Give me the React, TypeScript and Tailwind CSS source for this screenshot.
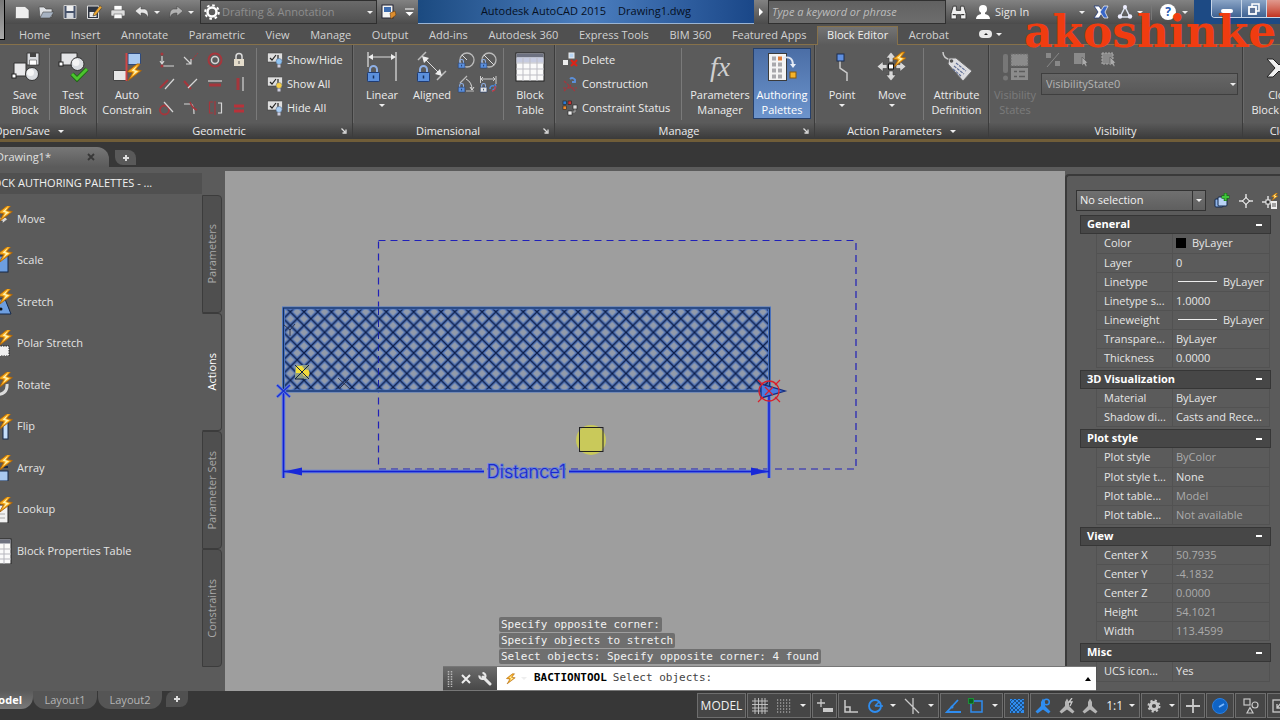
import { useState } from 'react';
import type { ReactNode } from 'react';
import { clsx } from 'clsx';

/* ---------- icon helpers ---------- */

type IconProps = { size?: number; box?: number; children?: ReactNode; className?: string };

function Icon({ size = 16, box, children, className }: IconProps) {
  const b = box ?? size;
  return (
    <svg aria-hidden="true" width={size} height={size} viewBox={`0 0 ${b} ${b}`} fill="none" className={clsx('shrink-0', className)}>
      {children}
    </svg>
  );
}

function Bolt({ x = 0, y = 0, s = 1 }: { x?: number; y?: number; s?: number }) {
  return (
    <g transform={`translate(${x} ${y}) scale(${s})`}>
      <path d="M10 0 L1 7 L6 8 L2 15 L14 6 L9 5 L13 0 Z" fill="#f5a81c" stroke="#a8620a" strokeWidth="0.8" />
      <path d="M10 1.500 L5 6 L8 7 L5.500 11 L11 6.500 L7.500 5.500 Z" fill="#fff3b0" />
    </g>
  );
}

function Lock({ x, y, s = 1, fill = '#5b8fdc' }: { x: number; y: number; s?: number; fill?: string }) {
  return (
    <g transform={`translate(${x} ${y}) scale(${s})`}>
      <path d="M3 8 V4.500 a3.500 3.500 0 0 1 7 0 V8" stroke="#8fb0e6" strokeWidth="2" fill="none" />
      <rect x="0.5" y="7.500" width="12" height="9" rx="0.8" fill={fill} stroke="#1f3c74" />
      <path d="M6.500 10.500 v3" stroke="#16305e" strokeWidth="1.500" />
    </g>
  );
}

function Caret({ className }: { className?: string }) {
  return <span aria-hidden="true" className={clsx('block h-0 w-0 shrink-0 border-x-[3px] border-t-[3px] border-x-transparent border-t-[#eee]', className)} />;
}

const SaveBlockIcon = (
  <Icon size={32}>
    <path d="M5 12 H17 V25 H5 Z" fill="#e8e8ea" stroke="#333" />
    <circle cx="23" cy="23" r="6.500" fill="#d9dce0" stroke="#333" />
    <circle cx="21.500" cy="21.500" r="3.500" fill="#f6f6f6" />
    <path d="M18 2 H30 V14 H18 Z" fill="#d8dade" stroke="#3a3a3a" />
    <path d="M21 2 h6 v4 h-6 Z" fill="#444" />
    <path d="M20.500 9 h7 v5 h-7 Z" fill="#fff" stroke="#555" strokeWidth="0.600" />
    <rect x="3" y="23" width="4" height="4" fill="#fff" stroke="#222" />
  </Icon>
);

const TestBlockIcon = (
  <Icon size={32}>
    <path d="M4 2 H20 V14 H4 Z" fill="#e3e4e6" stroke="#333" />
    <circle cx="20.500" cy="13" r="6.500" fill="#d9dce0" stroke="#333" />
    <circle cx="19" cy="11.500" r="3.500" fill="#f4f4f4" />
    <rect x="2" y="11" width="4" height="4" fill="#fff" stroke="#222" />
    <path d="M15 23 L20 28 L30 18" stroke="#17650d" strokeWidth="4.500" />
    <path d="M15 23 L20 28 L30 18" stroke="#4cc42e" strokeWidth="3" />
  </Icon>
);

const AutoConstrainIcon = (
  <Icon size={32}>
    <path d="M2.500 19.500 H16 V29.500 H2.500 Z" fill="#e6e6e6" stroke="#444" />
    <path d="M17 2.500 H29.500 V13.500 H17 Z" fill="#a9c9f0" stroke="#2e4a7c" />
    <path d="M15.500 2 V30" stroke="#cf4646" strokeWidth="2" />
    <Bolt x={15} y={13} s={1.1} />
  </Icon>
);

const LinearIcon = (
  <Icon size={32}>
    <path d="M2 1 V16 M30 1 V30" stroke="#c8c8c8" strokeWidth="1.500" />
    <path d="M4 6 H28" stroke="#ddd" />
    <path d="M2 6 l5 -3 v6 Z M30 6 l-5 -3 v6 Z" fill="#eee" />
    <Lock x={1} y={14} />
  </Icon>
);

const AlignedIcon = (
  <Icon size={32}>
    <path d="M2 9 L10 1 M21 29 L30 20" stroke="#bbb" strokeWidth="1.500" />
    <path d="M7 6 L25 24" stroke="#ddd" />
    <path d="M6 5 l7 2 l-5 5 Z M26 25 l-7 -2 l5 -5 Z" fill="#eee" />
    <Lock x={1} y={14} />
  </Icon>
);

const TableIcon = (
  <Icon size={32}>
    <rect x="2" y="2" width="28" height="28" fill="#fafafa" stroke="#222" />
    <rect x="2.500" y="2.500" width="27" height="4" fill="#6d7180" />
    <rect x="2.500" y="6.500" width="27" height="5" fill="#c6cbe0" />
    <path d="M9 7 V30 M16 7 V30 M23 7 V30 M2 12 H30 M2 18 H30 M2 24 H30" stroke="#bdbdc4" strokeWidth="1" />
  </Icon>
);

const PalettesIcon = (
  <Icon size={32}>
    <rect x="2.500" y="2.500" width="18" height="27" fill="#f4f4f4" stroke="#3b3b3b" />
    {[6, 12, 18, 24].map((y) => (
      <g key={y}>
        <rect x="6" y={y - 0.5} width="4" height="4" fill="#a9a9ad" />
        <rect x="12" y={y - 0.5} width="4" height="4" fill={y === 6 ? '#e07a35' : '#a9a9ad'} />
      </g>
    ))}
    <path d="M17 7 C24 5 27 8 27 14" stroke="#dfe6f2" strokeWidth="1.800" />
    <path d="M24 13 h6 l-3 4 Z" fill="#e8eef8" />
    <rect x="24" y="21" width="6" height="6" fill="#f5b32a" stroke="#8a5a08" />
  </Icon>
);

const PointIcon = (
  <Icon size={32}>
    <path d="M14 9 V17 L21 22 V30" stroke="#ccc" strokeWidth="1.500" />
    <rect x="11" y="3" width="7" height="7" fill="#5f8fe0" stroke="#1b2c50" />
  </Icon>
);

const MoveArrows = (
  <>
    <path d="M15 1 l5 6 h-3 v4 h-4 v-4 h-3 Z M15 30 l5 -6 h-3 v-4 h-4 v4 h-3 Z" fill="#d8d8d8" stroke="#444" strokeWidth="0.600" />
    <path d="M1 15.500 l6 -5 v3 h4 v4 h-4 v3 Z M30 15.500 l-6 -5 v3 h-4 v4 h4 v3 Z" fill="#d8d8d8" stroke="#444" strokeWidth="0.600" />
    <rect x="12.500" y="13" width="5" height="5" fill="#fff" stroke="#111" />
  </>
);

const MoveIcon = (
  <Icon size={32}>
    {MoveArrows}
    <Bolt x={16} y={1} s={1} />
  </Icon>
);

const TagIcon = (
  <Icon size={32}>
    <path d="M2 1 C2 6 5 8 10 9" stroke="#ccc" strokeWidth="1.500" />
    <path d="M7 13 L8 7 L15 7 L31 20 L22 30 Z" fill="#dcdcdf" stroke="#666" />
    <circle cx="10.500" cy="10" r="1.800" fill="#555" />
    <path d="M15 12 L25 20 M13 15 L23 23 M12 18 L20 25" stroke="#5f6d96" strokeWidth="1.200" strokeDasharray="3 1" />
  </Icon>
);

const VisStatesIcon = (
  <Icon size={32}>
    <rect x="4" y="3" width="5" height="19" rx="2" fill="#777" />
    <circle cx="6.500" cy="27" r="2.500" fill="#777" />
    <rect x="12" y="3" width="17" height="12" fill="#8b8b8b" stroke="#6b6b6b" strokeDasharray="2 1" />
    <rect x="12" y="17" width="17" height="12" fill="#8b8b8b" />
    <path d="M15 20.500 h3 M20 20.500 h6 M15 25.500 h3 M20 25.500 h6" stroke="#5c5c5c" strokeWidth="1.500" />
  </Icon>
);

const CloseBlockIcon = (
  <Icon size={32}>
    <path d="M1 8 H7 L13 14 L19 8 H24 L16 17 L24 26 H19 L13 20 L7 26 H1 L9 17 Z" fill="#f2f2f2" stroke="#222" />
  </Icon>
);

const W = '#d6d6d6';
const R = '#a5363c';

const geometricIcons: { name: string; art: ReactNode }[] = [
  { name: 'Coincident', art: <><path d="M3 4 V11 M1 9 l2 3 l2 -3 M3 14 H15" stroke={W} strokeWidth="1.200" /><circle cx="3" cy="2" r="1.500" fill={R} /><circle cx="3" cy="14" r="1.500" fill={R} /></> },
  { name: 'Collinear', art: <><path d="M1 5 L8 12 M8 7 V12 H3" stroke={W} strokeWidth="1.200" /><path d="M9 8 L15 1" stroke={R} strokeDasharray="3 1" /></> },
  { name: 'Concentric', art: <><circle cx="8" cy="8" r="6.500" stroke={R} strokeWidth="2" /><circle cx="8" cy="8" r="3.500" stroke={W} strokeWidth="1.500" /></> },
  { name: 'Fix', art: <><path d="M5 7 V4.500 a3 3 0 0 1 6 0 V7" stroke="#ddd" strokeWidth="1.500" /><rect x="3" y="7" width="10" height="7" fill="#e4dccb" /><path d="M8 9 v3" stroke="#555" /></> },
  { name: 'Parallel', art: <><path d="M1 12 L9 4" stroke={R} strokeWidth="2" /><path d="M6 13 L15 3" stroke={W} strokeWidth="1.200" /></> },
  { name: 'Perpendicular', art: <><path d="M1 5 L8 13" stroke={R} strokeWidth="2" /><path d="M5 12 L14 3" stroke={W} strokeWidth="1.200" /></> },
  { name: 'Horizontal', art: <><path d="M1 5 H15" stroke={W} strokeWidth="1.200" /><path d="M2 9 H14" stroke={R} strokeWidth="3" /></> },
  { name: 'Vertical', art: <><path d="M7 2 V14" stroke={R} strokeWidth="3" /><path d="M12 1 V15" stroke={W} strokeWidth="1.200" /></> },
  { name: 'Tangent', art: <><circle cx="5.500" cy="10" r="4.500" stroke={R} strokeWidth="1.800" /><path d="M5 2 L14 12" stroke={W} strokeWidth="1.200" /></> },
  { name: 'Smooth', art: <><path d="M1 4 H8 Q11 5 11 14" stroke={W} strokeWidth="1.200" /><path d="M7 2 Q9 8 14 10" stroke={R} strokeWidth="1.500" /></> },
  { name: 'Symmetric', art: <><path d="M6 2 H2.500 V13 H6 M8 1 V15" stroke={R} strokeWidth="1.200" /><path d="M11 3 H14.500 V13 H11" stroke={W} strokeWidth="1.200" /></> },
  { name: 'Equal', art: <path d="M3 6 H13 M3 11 H13" stroke="#b8323a" strokeWidth="3" /> },
];

function ShowHideGlyph({ bulb }: { bulb: string }) {
  return (
    <Icon>
      <rect x="0.500" y="1" width="15" height="9" fill="#dedede" stroke="#444" strokeWidth="0.600" />
      <path d="M3 6 l2 2 l4 -5 M11 3 v4" stroke="#222" strokeWidth="1.200" />
      <circle cx="12" cy="9.500" r="3" fill={bulb} stroke="#4c6383" strokeWidth="0.500" />
      <rect x="10.500" y="12.500" width="3" height="3" fill="#ccd" />
    </Icon>
  );
}

const DeleteGlyph = (
  <Icon>
    <rect x="7" y="1" width="5" height="5" fill="#b7d4f2" stroke="#eee" />
    <rect x="1" y="8" width="5" height="5" fill="#eee" />
    <path d="M9 8 l6 6 M15 8 l-6 6" stroke="#dd2417" strokeWidth="2.200" />
  </Icon>
);
const ConstructionGlyph = (
  <Icon>
    <path d="M8 3 a3 3 0 0 1 5 3 M13 3 v3 h-3" stroke="#5c8fd8" strokeWidth="1.800" />
    <path d="M2 5 L13 15 M1 12 H15 M2 15 L9 9" stroke={R} strokeWidth="1.200" strokeDasharray="3 1" />
  </Icon>
);
const StatusGlyph = (
  <Icon>
    <rect x="1" y="1" width="3.500" height="3.500" fill="#2d7bd2" stroke="#222" strokeWidth="0.600" />
    <rect x="6" y="1" width="3.500" height="3.500" fill="#c33" stroke="#222" strokeWidth="0.600" />
    <rect x="1" y="6" width="3.500" height="3.500" fill="#ef8a2c" stroke="#222" strokeWidth="0.600" />
    <path d="M8 12 h5 v-6" stroke="#aaa" />
    <rect x="11" y="5" width="4" height="4" fill="#ddd" stroke="#222" strokeWidth="0.600" />
    <rect x="6" y="11" width="4" height="4" fill="#eee" stroke="#222" strokeWidth="0.600" />
  </Icon>
);

const dimIcons: { name: string; art: ReactNode }[] = [
  { name: 'Radius', art: <><circle cx="10" cy="9" r="7" stroke="#bbb" strokeWidth="1.300" /><path d="M10 9 L5 4" stroke="#ddd" /><Lock x={1} y={8} s={0.55} /></> },
  { name: 'Diameter', art: <><circle cx="10" cy="9" r="7" stroke="#bbb" strokeWidth="1.300" /><path d="M5 4 L15 14" stroke="#ddd" /><Lock x={1} y={8} s={0.55} /></> },
  { name: 'Angular', art: <><path d="M3 8 L10 1 M9 16 H17" stroke="#bbb" strokeWidth="1.200" /><path d="M9 4 Q15 7 15 15 M13 12 l2 3 l2 -3" stroke="#ddd" /><Lock x={1} y={8} s={0.55} /></> },
  { name: 'Convert', art: <><path d="M1.500 1 V8 M17 1 V9 M2 4 H16 M4 2 l-2 2 l2 2 M14 2 l2 2 l-2 2" stroke="#ccc" /><Lock x={1} y={8} s={0.55} fill="#e5e5e5" /><path d="M11 14 q0 -4 4 -3 M16 9 q2 4 -3 7" stroke="#4b8be0" strokeWidth="1.500" /><path d="M13 16 q4 0 3 -5" stroke="#c33" strokeWidth="1.300" /></> },
];

/* ---------- title bar ---------- */

const quickAccess: { name: string; art: ReactNode; drop?: boolean }[] = [
  { name: 'New', art: <path d="M1.500 2.500 H11 L15 6 V14.500 H1.500 Z" fill="#eee" stroke="#555" strokeWidth="0.600" /> },
  { name: 'Open', art: <><path d="M1 3 H6 L8 5 H14 V13 H2 Z" fill="#dfe2e6" stroke="#444" strokeWidth="0.600" /><path d="M5 8 H16 L12 14 H2 Z" fill="#a6b2c2" stroke="#444" strokeWidth="0.600" /></> },
  { name: 'Save', art: <><path d="M2 1.500 H14 V14.500 H2 Z" fill="#46526a" stroke="#ccc" /><rect x="4.500" y="2" width="7" height="5" fill="#f0f0f0" /><rect x="4.500" y="9" width="7" height="5" fill="#d5d9df" /></> },
  { name: 'Save As', art: <><path d="M1.500 2 H12.500 V14.500 H1.500 Z" fill="#2e3440" stroke="#ddd" /><rect x="3.500" y="8" width="7" height="5" fill="#e8e8e8" /><path d="M8 9 L14 1.500 L16 3.500 L10 11 L7 12 Z" fill="#f0a830" stroke="#333" strokeWidth="0.600" /></> },
  { name: 'Plot', art: <><rect x="4" y="1.500" width="8" height="5" fill="#fff" stroke="#666" strokeWidth="0.600" /><rect x="1" y="6" width="14" height="6" rx="1" fill="#dcdcdc" stroke="#555" strokeWidth="0.600" /><rect x="4" y="10" width="8" height="4.500" fill="#fafafa" stroke="#666" strokeWidth="0.600" /></> },
  { name: 'Undo', drop: true, art: <path d="M1 7 L7 2 V5 H11 Q15 6 14 14 Q13 9.500 9 9 H7 V12 Z" fill="#e6e6e6" stroke="#444" strokeWidth="0.500" /> },
  { name: 'Redo', drop: true, art: <path d="M15 7 L9 2 V5 H5 Q1 6 2 14 Q3 9.500 7 9 H9 V12 Z" fill="#b2b2b2" stroke="#444" strokeWidth="0.500" /> },
];

function TitleBar() {
  return (
    <header className="flex h-6 items-stretch bg-linear-to-b from-[#828282] to-[#4b4b4b]">
      <div className="flex shrink-0 items-center gap-2 pl-[14px]">
        {quickAccess.map((q) => (
          <div key={q.name} className="flex items-center gap-1">
            <button type="button" aria-label={q.name}><Icon>{q.art}</Icon></button>
            {q.drop && <Caret />}
          </div>
        ))}
      </div>

      <div className="relative ml-[6px] flex w-[177px] shrink-0 items-center border border-[#2f2f2f] bg-linear-to-b from-[#6a6a6a] to-[#505050]">
        <Icon size={16} className="ml-[3px]">
          <circle cx="8" cy="8" r="4.500" stroke="#fff" strokeWidth="2.500" />
          <circle cx="8" cy="8" r="6.800" stroke="#fff" strokeWidth="2" strokeDasharray="2.600 2.740" />
        </Icon>
        <select aria-label="Workspace" className="w-full appearance-none bg-transparent pl-[2px] text-[11px] text-[#8d8d8d] outline-none">
          <option>Drafting &amp; Annotation</option>
        </select>
        <Caret className="pointer-events-none absolute right-[3px]" />
      </div>

      <div className="flex w-[41px] shrink-0 items-center gap-2 pl-1">
        <button type="button" aria-label="Render preview">
          <Icon>
            <rect x="1" y="1" width="11" height="13" fill="#f4f4f4" stroke="#223" />
            <rect x="3" y="3" width="7" height="5" fill="#3d6cb0" />
            <path d="M9 9 l5 -2 l1 4 l-5 4 Z" fill="#dd8d2e" stroke="#6b3d0a" strokeWidth="0.600" />
          </Icon>
        </button>
        <Icon size={9}><path d="M0 1 H9" stroke="#fff" /><path d="M0.500 4 H8.500 L4.500 8 Z" fill="#fff" /></Icon>
      </div>

      <div className="flex min-w-0 flex-1 items-center justify-center gap-3 border-b border-[#9ab4d4] bg-linear-to-r from-[#1b4a80] via-[#4c7fc0] to-[#1a4788] text-[11px] whitespace-nowrap text-[#06101f]">
        <span>Autodesk AutoCAD 2015</span>
        <span>Drawing1.dwg</span>
      </div>

      <button type="button" aria-label="Collapse search" className="flex w-[14px] shrink-0 items-center justify-center">
        <span className="h-0 w-0 border-y-4 border-l-4 border-y-transparent border-l-white" />
      </button>
      <input
        type="search"
        aria-label="Search help"
        placeholder="Type a keyword or phrase"
        className="w-[178px] shrink-0 border border-[#303030] bg-linear-to-b from-[#616161] to-[#6d6d6d] px-[3px] text-[11px] text-white italic outline-none placeholder:text-[#bdbdbd]"
      />
      <div className="flex w-[248px] shrink-0 items-center text-[11px] text-[#e6e6e6]">
        <button type="button" aria-label="Search" className="ml-1">
          <Icon size={17} box={16}>
            <path d="M3 2 h3 v4 h4 v-4 h3 l2 7 v5 h-5 v-4 h-4 v4 h-5 v-5 Z" fill="#f0f0f0" stroke="#333" strokeWidth="0.800" />
            <path d="M2.500 10 h3 M10.500 10 h3" stroke="#333" />
          </Icon>
        </button>
        <button type="button" className="ml-2 flex items-center gap-1">
          <Icon><circle cx="8" cy="5" r="4" fill="#fff" /><path d="M1 15 Q1 11 6 10 V8 h4 v2 Q15 11 15 15 Z" fill="#fff" /></Icon>
          Sign In
        </button>
        <Caret className="ml-auto" />
        <button type="button" aria-label="Autodesk Exchange" className="ml-2">
          <Icon><path d="M1 2 H6 L10 8 L6 14 H1 L5 8 Z" fill="#fff" stroke="#223a78" strokeWidth="0.800" /><path d="M15 2 H11 L7 8 L11 14 H15 L12 8 Z" fill="#3866c8" stroke="#eee" strokeWidth="0.800" /></Icon>
        </button>
        <button type="button" aria-label="Autodesk 360" className="ml-2">
          <Icon><path d="M8 3 L3 13 H13 Z" stroke="#dce4f0" strokeWidth="1.500" /><circle cx="8" cy="3" r="2" fill="#eef" /><circle cx="3" cy="12.500" r="2.200" fill="#eef" /><circle cx="13" cy="12.500" r="2.200" fill="#eef" /></Icon>
        </button>
        <Caret className="ml-1" />
        <span className="ml-2 h-4 w-px bg-[#777]" />
        <button type="button" aria-label="Help" className="ml-2 flex h-4 w-4 items-center justify-center rounded-full bg-white text-[12px] leading-4 font-bold text-[#2459b4]">?</button>
        <Caret className="mx-[6px]" />
      </div>
      <div className="flex w-[86px] shrink-0 items-start justify-end bg-[#1d4a84]">
        <div className="flex h-[18px] w-[69px] overflow-hidden rounded-bl border border-t-0 border-r-0 border-[#c8d6e8]">
          <button type="button" aria-label="Minimize" className="flex w-[29px] items-center justify-center bg-linear-to-b from-[#8ba5c6] to-[#3f6292]"><span className="mt-1 h-1 w-3 rounded-sm bg-white" /></button>
          <button type="button" aria-label="Restore" className="flex w-[26px] items-center justify-center border-x border-[#c8d6e8] bg-linear-to-b from-[#8ba5c6] to-[#3f6292]">
            <Icon size={12}><rect x="4" y="1" width="7" height="7" stroke="#fff" strokeWidth="1.500" /><rect x="1" y="4" width="7" height="7" fill="#5d7397" stroke="#fff" strokeWidth="1.800" /></Icon>
          </button>
          <button type="button" aria-label="Close" className="flex-1 bg-linear-to-b from-[#e0998e] to-[#c0311f]" />
        </div>
      </div>
    </header>
  );
}

/* ---------- ribbon ---------- */

const tabs = ['Home', 'Insert', 'Annotate', 'Parametric', 'View', 'Manage', 'Output', 'Add-ins', 'Autodesk 360', 'Express Tools', 'BIM 360', 'Featured Apps', 'Block Editor', 'Acrobat'];

function RibbonTabs({ active, onPick }: { active: string; onPick: (t: string) => void }) {
  return (
    <nav className="flex h-[21px] items-stretch border-b border-[#86714a] bg-[#505050] pl-[9px] text-[11px] text-[#d2d2d2]">
      <div className="flex w-[950px] shrink-0 justify-between">
        {tabs.map((t) => (
          <button
            key={t}
            type="button"
            onClick={() => onPick(t)}
            className={clsx(
              'mt-[2px] -mb-px border border-b-0 px-[9px] pb-[2px] whitespace-nowrap',
              t === active ? 'border-[#86714a] bg-linear-to-b from-[#747474] to-[#5b5b5b] text-[#f0f0f0]' : 'border-transparent',
            )}
          >
            {t}
          </button>
        ))}
      </div>
      <button type="button" aria-label="Minimize ribbon" className="ml-5 flex items-center gap-1">
        <span className="flex h-2 w-[13px] items-center justify-center rounded-sm bg-[#e8e8e8]"><span className="h-0 w-0 border-x-2 border-b-2 border-x-transparent border-b-[#222]" /></span>
        <Caret />
      </button>
    </nav>
  );
}

function BigButton({ icon, lines, className, drop, disabled, pressed }: { icon: ReactNode; lines: string[]; className: string; drop?: boolean; disabled?: boolean; pressed?: boolean }) {
  return (
    <button
      type="button"
      disabled={disabled}
      aria-pressed={pressed}
      className={clsx(
        'flex h-[71px] shrink-0 flex-col items-center border pt-[2px] leading-[15px] whitespace-nowrap',
        className,
        pressed ? 'border-[#26406b] bg-linear-to-b from-[#4b6ea6] to-[#6c94cc] text-white' : 'border-transparent',
        disabled ? 'text-[#7c7c7c]' : 'text-[#ececec]',
      )}
    >
      {icon}
      <span className="mt-1">{lines[0]}</span>
      {lines[1] && <span>{lines[1]}</span>}
      {drop && <Caret className="mt-[2px]" />}
    </button>
  );
}

function Panel({ title, className, children, launcher, drop }: { title: string; className: string; children: ReactNode; launcher?: boolean; drop?: boolean }) {
  return (
    <section aria-label={title} className={clsx('flex flex-col border-r border-[#3c3c3c] shadow-[inset_1px_0_0_#6a6a6a]', className)}>
      <div className="flex h-[78px] items-start overflow-hidden pt-[3px]">{children}</div>
      <div className="flex h-4 items-center justify-center bg-linear-to-b from-[#5a5a5a] to-[#3a3a3a] text-[#ececec]">
        <span className={clsx('whitespace-nowrap', launcher && 'ml-auto')}>{title}</span>
        {drop && <Caret className="ml-2 border-x-4 border-t-4" />}
        {launcher && (
          <button type="button" aria-label={`${title} settings`} className="mr-[5px] ml-auto">
            <Icon size={6}><path d="M0.500 0.500 L4 4 M5 1.500 V5 H1.500" stroke="#ddd" strokeWidth="1.300" /></Icon>
          </button>
        )}
      </div>
    </section>
  );
}

const Divider = ({ className }: { className?: string }) => <span className={clsx('h-[72px] w-px shrink-0 bg-[#7a7a7a]', className)} />;

function RowButton({ icon, label }: { icon: ReactNode; label: string }) {
  return (
    <button type="button" className="flex h-6 items-center gap-1 whitespace-nowrap text-[#ececec]">
      {icon}
      {label}
    </button>
  );
}

function Ribbon() {
  return (
    <div className="flex border-b-3 border-[#705d38] bg-[#5b5b5b] text-[11px]">
      <Panel title="Open/Save" drop className="-ml-[38px] w-[135px] shrink-0">
        <div className="flex w-full justify-end">
          <BigButton icon={<Icon size={32}><Bolt x={17} y={6} /><circle cx="23" cy="21" r="6" fill="#ddd" stroke="#333" /></Icon>} lines={['Edit', 'Block']} className="w-8" />
          <BigButton icon={SaveBlockIcon} lines={['Save', 'Block']} className="w-12" />
          <Divider />
          <BigButton icon={TestBlockIcon} lines={['Test', 'Block']} className="w-[46px]" />
        </div>
      </Panel>

      <Panel title="Geometric" launcher className="w-[256px] shrink-0">
        <BigButton icon={AutoConstrainIcon} lines={['Auto', 'Constrain']} className="w-[60px]" />
        <div className="mt-1 grid grid-cols-4 gap-2 pl-[2px]">
          {geometricIcons.map((g) => (
            <button key={g.name} type="button" aria-label={g.name}><Icon>{g.art}</Icon></button>
          ))}
        </div>
        <Divider className="ml-[9px]" />
        <div className="flex flex-col pl-[10px]">
          <RowButton icon={<ShowHideGlyph bulb="#8ec3f2" />} label="Show/Hide" />
          <RowButton icon={<ShowHideGlyph bulb="#f8cf45" />} label="Show All" />
          <RowButton icon={<ShowHideGlyph bulb="#a9cef5" />} label="Hide All" />
        </div>
      </Panel>

      <Panel title="Dimensional" launcher className="w-[202px] shrink-0">
        <BigButton icon={LinearIcon} lines={['Linear']} drop className="ml-1 w-[50px]" />
        <BigButton icon={AlignedIcon} lines={['Aligned']} className="w-[50px]" />
        <div className="mt-[3px] grid grid-cols-2 gap-[6px]">
          {dimIcons.map((d) => (
            <button key={d.name} type="button" aria-label={d.name}><Icon size={18}>{d.art}</Icon></button>
          ))}
        </div>
        <Divider className="ml-2" />
        <BigButton icon={TableIcon} lines={['Block', 'Table']} className="ml-[2px] w-12" />
      </Panel>

      <Panel title="Manage" launcher className="w-[260px] shrink-0">
        <div className="flex w-[126px] shrink-0 flex-col pl-[7px]">
          <RowButton icon={DeleteGlyph} label="Delete" />
          <RowButton icon={ConstructionGlyph} label="Construction" />
          <RowButton icon={StatusGlyph} label="Constraint Status" />
        </div>
        <Divider />
        <BigButton
          icon={<span className="flex h-8 items-center font-['Liberation_Serif',serif] text-[28px] leading-8 text-[#cfcfcf] italic">fx</span>}
          lines={['Parameters', 'Manager']}
          className="ml-[5px] w-[66px]"
        />
        <BigButton icon={PalettesIcon} lines={['Authoring', 'Palettes']} pressed className="w-[58px]" />
      </Panel>

      <Panel title="Action Parameters" drop className="w-[174px] shrink-0">
        <BigButton icon={PointIcon} lines={['Point']} drop className="ml-[2px] w-[50px]" />
        <BigButton icon={MoveIcon} lines={['Move']} drop className="w-[50px]" />
        <Divider className="ml-[6px]" />
        <BigButton icon={TagIcon} lines={['Attribute', 'Definition']} className="w-[65px]" />
      </Panel>

      <Panel title="Visibility" className="w-[254px] shrink-0">
        <BigButton icon={VisStatesIcon} lines={['Visibility', 'States']} disabled className="w-[52px]" />
        <div className="flex min-w-0 flex-1 flex-col pt-1 pr-1">
          <div className="flex gap-3 pl-1">
            <Icon><rect x="1" y="1" width="5" height="5" fill="#888" /><rect x="10" y="9" width="5" height="5" fill="#888" /><path d="M2 15 L14 1" stroke="#888" /></Icon>
            <Icon><rect x="1" y="1" width="11" height="11" fill="#8a8a8a" /><path d="M9 5 v9 l2 -2 l2 3 l1 -1 l-1 -3 h2 Z" fill="#aaa" stroke="#555" strokeWidth="0.600" /></Icon>
            <Icon><rect x="1" y="1" width="11" height="11" fill="#8a8a8a" stroke="#aaa" strokeDasharray="2 1" /><path d="M9 5 v9 l2 -2 l2 3 l1 -1 l-1 -3 h2 Z" fill="#aaa" stroke="#555" strokeWidth="0.600" /></Icon>
          </div>
          <div className="relative mt-[5px] flex items-center">
            <select disabled aria-label="Visibility state" className="h-[22px] w-full appearance-none border border-[#3f3f3f] bg-linear-to-b from-[#666] to-[#585858] px-1 text-[11px] text-[#b4b4b4] opacity-100">
              <option>VisibilityState0</option>
            </select>
            <Caret className="pointer-events-none absolute right-[2px] border-x-4 border-t-4" />
          </div>
        </div>
      </Panel>

      <Panel title="Close" className="w-[82px] shrink-0">
        <BigButton icon={CloseBlockIcon} lines={['Close', 'Block Editor']} className="w-[78px]" />
      </Panel>
    </div>
  );
}

function DocTabs() {
  return (
    <div className="flex h-[25px] items-end bg-[#373737] text-[11px] text-[#e0e0e0]">
      <div className="flex h-5 w-[109px] items-center justify-between rounded-tr-xl bg-linear-to-b from-[#777] to-[#5b5b5b] pr-[14px]">
        <button type="button" className="-ml-1">Drawing1*</button>
        <button type="button" aria-label="Close drawing"><Icon size={8}><path d="M1 1 L7 7 M7 1 L1 7" stroke="#383838" strokeWidth="1.800" /></Icon></button>
      </div>
      <button type="button" aria-label="New drawing" className="mb-[2px] ml-[6px] flex h-[15px] w-[21px] items-center justify-center rounded-tr-lg rounded-bl-lg bg-[#595959]">
        <Icon size={8}><path d="M4 1 V7 M1 4 H7" stroke="#ddd" strokeWidth="2" /></Icon>
      </button>
    </div>
  );
}

/* ---------- block authoring palettes ---------- */

const paletteItems: { name: string; art: ReactNode; bolt?: boolean }[] = [
  { name: 'Move', bolt: true, art: <g transform="translate(-6 0) scale(0.85)">{MoveArrows}</g> },
  { name: 'Scale', bolt: true, art: <rect x="3" y="9" width="17" height="16" fill="#6d9ee0" stroke="#14284a" /> },
  { name: 'Stretch', bolt: true, art: <><path d="M2 25 H23 L17 10 H6 Z" fill="#6d9ee0" stroke="#14284a" /><circle cx="13" cy="20" r="1.500" fill="#111" /></> },
  { name: 'Polar Stretch', bolt: true, art: <rect x="10" y="16" width="11" height="10" fill="#eee" stroke="#222" strokeDasharray="1.500 1" /> },
  { name: 'Rotate', bolt: true, art: <path d="M19 12 Q20 23 6 23" stroke="#dcdcdc" strokeWidth="3" /> },
  { name: 'Flip', bolt: true, art: <><rect x="15" y="8" width="5" height="17" fill="#c6defa" stroke="#14284a" /><rect x="5" y="8" width="5" height="17" fill="#6d9ee0" stroke="#14284a" /></> },
  { name: 'Array', bolt: true, art: <><rect x="3" y="16" width="17" height="10" fill="#a9c9f0" stroke="#14284a" /><path d="M14 12 h6" stroke="#14284a" strokeWidth="2" /></> },
  { name: 'Lookup', bolt: true, art: <><rect x="5" y="8" width="15" height="18" fill="#f1f1f1" stroke="#222" /><path d="M8 17 h9 M8 21 h9" stroke="#aaa" /></> },
  { name: 'Block Properties Table', art: <><rect x="0" y="1" width="23" height="25" fill="#fafafa" stroke="#222" /><rect x="0" y="1.500" width="22.500" height="4" fill="#6d7180" /><path d="M16 6 V26 M10 6 V26 M0 11 H23 M0 16 H23 M0 21 H23" stroke="#b6b6bd" /></> },
];

const paletteTabs = ['Parameters', 'Actions', 'Parameter Sets', 'Constraints'];

function Palettes() {
  const [tab, setTab] = useState('Actions');
  return (
    <aside className="flex w-[225px] shrink-0 bg-[#5b5b5b] pt-[2px] text-[11px] text-[#e4e4e4]">
      <div className="flex min-w-0 flex-1 flex-col overflow-hidden">
        <h2 className="flex h-[21px] items-center bg-[#505050] whitespace-nowrap text-[#f0f0f0]"><span className="-ml-5">BLOCK AUTHORING PALETTES - ...</span></h2>
        <ul className="mt-1 -ml-3 flex h-[374px] flex-col">
          {paletteItems.map((p) => (
            <li key={p.name} className="flex flex-1 items-center">
              <button type="button" className="flex items-center gap-[3px] whitespace-nowrap">
                <Icon size={26}>{p.art}{p.bolt && <Bolt x={9} y={-1} s={1.1} />}</Icon>
                {p.name}
              </button>
            </li>
          ))}
        </ul>
      </div>
      <div role="tablist" className="flex w-[23px] flex-col pt-[22px] pr-1">
        {paletteTabs.map((t) => (
          <button
            key={t}
            type="button"
            role="tab"
            aria-selected={t === tab}
            onClick={() => setTab(t)}
            className={clsx(
              'flex h-[118px] w-5 items-center justify-center rounded-r border border-[#3c3c3c]',
              t === tab ? 'border-l-transparent bg-[#5b5b5b] text-white' : 'bg-[#4f4f4f] text-[#a8a8a8]',
            )}
          >
            <span className="rotate-180 whitespace-nowrap [writing-mode:vertical-rl]">{t}</span>
          </button>
        ))}
      </div>
    </aside>
  );
}

/* ---------- drawing ---------- */

function Drawing() {
  return (
    <div className="min-w-0 flex-1 overflow-hidden bg-[#9e9e9e]">
      <svg role="img" aria-label="Block drawing" width="840" height="520" viewBox="225 171 840 520" fill="none">
        <defs>
          <pattern id="hatch" width="13.700" height="13.700" patternUnits="userSpaceOnUse" patternTransform="translate(283.500 305)">
            <path d="M-2 -2 L15.700 15.700 M-2 15.700 L15.700 -2" stroke="#5577b8" strokeWidth="4" />
            <path d="M-2 -2 L15.700 15.700 M-2 15.700 L15.700 -2" stroke="#0b1d4a" strokeWidth="1.300" />
          </pattern>
        </defs>
        <rect x="378.500" y="240.500" width="477.500" height="228.500" stroke="#2020b8" strokeWidth="1.200" strokeDasharray="7 5" />
        <rect x="283.500" y="308" width="486" height="83" fill="#929bab" />
        <rect x="283.500" y="308" width="486" height="83" fill="url(#hatch)" />
        <rect x="283.500" y="308" width="486" height="83" stroke="#4f79c8" strokeWidth="3" />
        <rect x="283.500" y="308" width="486" height="83" stroke="#16305e" strokeWidth="1.200" />
        <path d="M378.500 308 V391" stroke="#1a22a8" strokeDasharray="7 5" />
        <path d="M284 325 l6 5 l5 -6 M290 330 v6 M338 378 l12 11 M339 389 l10 -10" stroke="#2c3550" />

        <rect x="295" y="365" width="14" height="14" fill="#8d9c86" />
        <path d="M296 366 h6 l3 4 l-4 3 h-5 Z" fill="#f3df3a" />
        <circle cx="306" cy="373" r="3.500" fill="#eed83c" />
        <path d="M295 365 l14 14 M309 365 l-14 14 M295 379 h9" stroke="#102040" />

        {/* distance parameter */}
        <path d="M283.500 391 V478 M769 391 V478 M284 471.500 H484 M569 471.500 H769" stroke="#5c78e0" strokeWidth="3.500" />
        <path d="M283.500 391 V478 M769 391 V478 M284 471.500 H484 M569 471.500 H769" stroke="#1420d0" strokeWidth="1.500" />
        <path d="M284 471.500 l18 -4 v8 Z M769 471.500 l-18 -4 v8 Z" fill="#1828d8" />
        <path d="M277 385 L290 397 M290 385 L277 397" stroke="#5c78e0" strokeWidth="3" />
        <path d="M277 385 L290 397 M290 385 L277 397" stroke="#1a2fd0" strokeWidth="1.300" />
        <text x="526.500" y="477.500" textAnchor="middle" className="font-[Inter,sans-serif] text-[18px] font-light" fill="#1a28cc" stroke="#6c84d8" strokeWidth="2" paintOrder="stroke">Distance1</text>

        {/* end grip */}
        <path d="M761 384 L785 391 L761 398 Z" fill="#4a7be0" stroke="#142c80" strokeWidth="1.300" />
        <circle cx="769" cy="391" r="10" stroke="#d8202c" strokeWidth="1.300" />
        <path d="M758 380 l5 5 M780 380 l-5 5 M758 402 l5 -5 M780 402 l-5 -5 M765 387 l8 8 M773 387 l-8 8" stroke="#d8202c" strokeWidth="1.200" />

        <circle cx="591" cy="440" r="15" fill="#c9c95a" />
        <rect x="579.500" y="427.500" width="23.500" height="24" stroke="#222" />
      </svg>
    </div>
  );
}

/* ---------- properties ---------- */

type Prop = { label: string; value: string; dim?: boolean; mark?: 'swatch' | 'line' };

const propertyGroups: { title: string; rows: Prop[] }[] = [
  {
    title: 'General',
    rows: [
      { label: 'Color', value: 'ByLayer', mark: 'swatch' },
      { label: 'Layer', value: '0' },
      { label: 'Linetype', value: 'ByLayer', mark: 'line' },
      { label: 'Linetype s...', value: '1.0000' },
      { label: 'Lineweight', value: 'ByLayer', mark: 'line' },
      { label: 'Transpare...', value: 'ByLayer' },
      { label: 'Thickness', value: '0.0000' },
    ],
  },
  { title: '3D Visualization', rows: [{ label: 'Material', value: 'ByLayer' }, { label: 'Shadow di...', value: 'Casts and Rece...' }] },
  {
    title: 'Plot style',
    rows: [
      { label: 'Plot style', value: 'ByColor', dim: true },
      { label: 'Plot style t...', value: 'None' },
      { label: 'Plot table...', value: 'Model', dim: true },
      { label: 'Plot table...', value: 'Not available', dim: true },
    ],
  },
  {
    title: 'View',
    rows: [
      { label: 'Center X', value: '50.7935', dim: true },
      { label: 'Center Y', value: '-4.1832', dim: true },
      { label: 'Center Z', value: '0.0000', dim: true },
      { label: 'Height', value: '54.1021', dim: true },
      { label: 'Width', value: '113.4599', dim: true },
    ],
  },
  { title: 'Misc', rows: [{ label: 'UCS icon...', value: 'Yes' }] },
];

function Properties() {
  return (
    <aside className="mt-[3px] w-[215px] shrink-0 overflow-hidden rounded-tl border-t-2 border-l-2 border-[#3a3a3a] bg-[#5b5b5b] text-[11px] text-[#e6e6e6]">
      <div className="flex items-center pt-[14px] pl-[9px]">
        <div className="relative flex w-[130px] items-center">
          <select aria-label="Selection" className="h-[21px] w-full appearance-none border border-[#333] bg-linear-to-b from-[#707070] to-[#5f5f5f] px-[3px] text-[11px] text-[#f2f2f2]">
            <option>No selection</option>
          </select>
          <span className="pointer-events-none absolute right-0 flex h-[21px] w-[14px] items-center justify-center border border-[#333]"><Caret className="border-x-2 border-t-2" /></span>
        </div>
        <div className="flex gap-2 pl-2">
          <button type="button" aria-label="Toggle PICKADD">
            <Icon><rect x="1" y="6" width="8" height="8" rx="1" fill="#8fb4e8" stroke="#15284a" /><rect x="4" y="4" width="9" height="9" rx="1" fill="#b9d3f5" stroke="#15284a" /><path d="M11.500 0 v8 M7.500 4 h8" stroke="#1d6d1a" strokeWidth="3.500" /><path d="M11.500 0.500 v7 M8 4 h7" stroke="#3fc53a" strokeWidth="2" /></Icon>
          </button>
          <button type="button" aria-label="Select objects">
            <Icon><path d="M8 1 V15 M1 8 H15" stroke="#ddd" strokeWidth="1.500" /><rect x="5.500" y="5.500" width="5" height="5" fill="#5b5b5b" stroke="#eee" transform="rotate(45 8 8)" /></Icon>
          </button>
          <button type="button" aria-label="Quick select">
            <Icon><path d="M6 3 V15 M0 9 H12" stroke="#ddd" strokeWidth="1.500" /><rect x="4" y="7" width="4" height="4" fill="#333" stroke="#eee" /><rect x="9" y="8" width="6" height="8" fill="#eee" /><path d="M10 11 h4 M10 13 h4" stroke="#555" /><Bolt x={9} y={0} s={0.5} /></Icon>
          </button>
        </div>
      </div>
      <div className="mt-1 ml-[13px] flex w-[191px] flex-col gap-[2px]">
        {propertyGroups.map((g) => (
          <section key={g.title}>
            <h3 className="flex h-[19px] items-center justify-between border border-[#363636] bg-[#474747] pr-2 pl-[6px] font-bold text-white">
              {g.title}
              <button type="button" aria-label={`Collapse ${g.title}`}><span className="block h-[2px] w-[6px] bg-white" /></button>
            </h3>
            <table className="ml-4 w-[174px] table-fixed border-collapse">
              <tbody>
                {g.rows.map((r, i) => (
                  <tr key={i} className="h-[19px] border-b border-[#525252]">
                    <th scope="row" className="w-[76px] border-x border-[#525252] py-0 pr-0 pl-[7px] text-left leading-4 font-normal whitespace-nowrap">{r.label}</th>
                    <td className={clsx('border-r border-[#525252] p-0 pl-[3px] leading-4 whitespace-nowrap', r.dim && 'text-[#ababab]')}>
                      <span className="flex items-center gap-[6px]">
                        {r.mark === 'swatch' && <span className="h-[10px] w-[10px] bg-black" />}
                        {r.mark === 'line' && <span className="ml-[2px] h-px w-[39px] bg-[#eee]" />}
                        {r.value}
                      </span>
                    </td>
                  </tr>
                ))}
              </tbody>
            </table>
          </section>
        ))}
      </div>
    </aside>
  );
}

/* ---------- command line ---------- */

const history = ['Specify opposite corner:', 'Specify objects to stretch', 'Select objects: Specify opposite corner: 4 found'];

function CommandLine() {
  return (
    <div className="absolute right-[184px] bottom-0 left-[443px] font-['DejaVu_Sans_Mono',monospace] text-[11px]">
      <div className="mb-[2px] flex flex-col items-start gap-px pl-[56px] text-[#f2f2f2]">
        {history.map((h) => (
          <p key={h} className="rounded-xs bg-[#6f6f6f] px-[2px] leading-[15px]">{h}</p>
        ))}
      </div>
      <div className="flex h-[25px] items-stretch border-y border-[#777] bg-white">
        <div className="flex w-[54px] shrink-0 items-center justify-between bg-linear-to-b from-[#6c6c6c] to-[#484848] pr-[5px] pl-1">
          <svg aria-hidden="true" width="6" height="18" viewBox="0 0 6 18" fill="none"><path d="M1.500 1 V17 M4.500 1 V17" stroke="#b5b5b5" strokeWidth="1.500" strokeDasharray="1.500 1" /></svg>
          <button type="button" aria-label="Close command line"><Icon size={10}><path d="M1 1 L9 9 M9 1 L1 9" stroke="#eee" strokeWidth="2" /></Icon></button>
          <button type="button" aria-label="Customize">
            <Icon size={14}><path d="M5 5 L12 12" stroke="#e8e8e8" strokeWidth="3" strokeLinecap="round" /><path d="M1.500 3.500 a3 3 0 1 0 3 -2.500" stroke="#e8e8e8" strokeWidth="2.200" /></Icon>
          </button>
        </div>
        <div className="flex items-center gap-1 pl-2">
          <Icon size={12} box={16}><Bolt x={1} y={1} s={0.9} /></Icon>
          <Caret className="border-x-2 border-t-[#888]" />
        </div>
        <label htmlFor="command" className="flex items-center gap-[6px] pl-[7px] whitespace-nowrap text-[#444]"><b className="text-black">BACTIONTOOL</b> Select objects:</label>
        <input id="command" type="text" className="min-w-0 flex-1 bg-transparent px-2 outline-none" />
        <button type="button" aria-label="Command history" className="flex w-4 items-center justify-center"><span className="h-0 w-0 border-x-[3px] border-b-4 border-x-transparent border-b-black" /></button>
      </div>
    </div>
  );
}

/* ---------- status bar ---------- */

const B = '#2f8df0';
const G = '#c9c9c9';

function StatusCell({ className, children }: { className?: string; children: ReactNode }) {
  return <div className={clsx('flex h-[25px] shrink-0 items-center justify-around border border-[#6e6e6e] bg-[#464646]', className)}>{children}</div>;
}

function Tool({ name, children }: { name: string; children: ReactNode }) {
  return <button type="button" aria-label={name}><Icon>{children}</Icon></button>;
}

const Person = ({ color }: { color: string }) => <path d="M8 0.500 L10 4 V8 L15.500 13.500 L13.500 15.500 L8 11.500 L2.500 15.500 L0.500 13.500 L6 8 V4 Z" fill={color} />;

const BigCaret = () => <Caret className="border-t-4" />;

function StatusBar() {
  return (
    <footer className="flex h-[29px] shrink-0 overflow-hidden bg-[#373737] text-[11px]">
      <nav className="flex min-w-0 flex-1 items-start text-[#b4b4b4]">
        <button type="button" className="flex h-[18px] w-[33px] items-center justify-end rounded-br-xl bg-linear-to-b from-[#5b5b5b] to-[#7a7a7a] pr-[11px] font-bold text-white">Model</button>
        <button type="button" className="flex h-[18px] w-16 items-center justify-center rounded-b-xl bg-[#555]">Layout1</button>
        <button type="button" className="ml-px flex h-[18px] w-16 items-center justify-center rounded-b-xl bg-[#555]">Layout2</button>
        <button type="button" aria-label="New layout" className="ml-1 flex h-4 w-[22px] items-center justify-center rounded-tl-lg rounded-br-lg bg-[#505050]"><Icon size={8}><path d="M4 1 V7 M1 4 H7" stroke="#ddd" strokeWidth="2" /></Icon></button>
      </nav>
      <div className="flex gap-px pt-[2px] text-[#f0f0f0]">
        <StatusCell className="w-[49px] text-[12px]"><button type="button">MODEL</button></StatusCell>
        <StatusCell className="w-[64px]">
          <Tool name="Grid"><path d="M3 0 V16 M6.500 0 V16 M10 0 V16 M13 0 V16 M0 3 H16 M0 6.500 H16 M0 10 H16 M0 13 H16" stroke={G} strokeWidth="0.900" /></Tool>
          <Tool name="Snap"><path d="M1 2 H16 M1 5 H16 M1 8 H16 M1 11 H16 M1 14 H16" stroke={G} strokeWidth="1.200" strokeDasharray="1.200 1.800" /></Tool>
          <BigCaret />
        </StatusCell>
        <StatusCell className="w-[25px]"><Tool name="Dynamic input"><path d="M4 1 V9 M0 5 H8" stroke={G} strokeWidth="1.300" /><rect x="6" y="10" width="10" height="4" fill={G} /></Tool></StatusCell>
        <StatusCell className="w-[101px]">
          <Tool name="Ortho"><path d="M2 2 V14 H15 M2 9 H7 V14" stroke={G} strokeWidth="1.500" /></Tool>
          <Tool name="Polar"><circle cx="8" cy="8" r="6" stroke={B} strokeWidth="1.800" /><path d="M8 8 H16 M8 8 L12 4" stroke={B} strokeWidth="1.500" /></Tool>
          <BigCaret />
          <Tool name="Isodraft"><path d="M1 1 L15 15 M9 0 V16" stroke={G} strokeWidth="1.300" /></Tool>
          <BigCaret />
        </StatusCell>
        <StatusCell className="w-[63px]">
          <Tool name="Object snap tracking"><path d="M13 2 L2 14 H16" stroke={B} strokeWidth="1.800" /><circle cx="7" cy="9" r="1.500" fill={B} /></Tool>
          <Tool name="Object snap"><rect x="3" y="3" width="11" height="11" stroke={B} strokeWidth="1.500" /><rect x="0.500" y="0.500" width="5" height="5" fill="#0d5f22" stroke="#1f8d38" /></Tool>
          <BigCaret />
        </StatusCell>
        <StatusCell className="w-[25px]"><Tool name="Transparency"><rect x="1" y="1" width="14" height="14" fill={B} /><path d="M1 4 L12 15 M1 8 L8 15 M1 12 L4 15 M4 1 L15 12 M8 1 L15 8 M12 1 L15 4 M4 1 L1 4 M8 1 L1 8 M12 1 L1 12 M15 2 L2 15 M15 6 L6 15 M15 10 L10 15" stroke="#1b426f" strokeWidth="0.800" /></Tool></StatusCell>
        <StatusCell className="w-[110px]">
          <Tool name="Annotation visibility"><Person color={B} /><circle cx="11.500" cy="4" r="2.800" stroke={B} strokeWidth="1.500" /></Tool>
          <Tool name="Auto scale"><Person color="#b5b5b5" /><path d="M13 0 L10 4 H13 L11 8" stroke="#ccc" strokeWidth="1.300" /></Tool>
          <Tool name="Annotation scale"><Person color="#b5b5b5" /></Tool>
          <button type="button" className="flex items-center gap-[6px] text-[12px]">1:1 <BigCaret /></button>
        </StatusCell>
        <StatusCell className="w-[38px]"><Tool name="Workspace switching"><circle cx="8" cy="8" r="3.600" stroke={G} strokeWidth="3" /><circle cx="8" cy="8" r="5.500" stroke={G} strokeWidth="2" strokeDasharray="2.160 2.160" /></Tool><BigCaret /></StatusCell>
        <StatusCell className="w-[25px]"><Tool name="Annotation monitor"><path d="M8 1 V15 M1 8 H15" stroke={G} strokeWidth="1.800" /></Tool></StatusCell>
        <StatusCell className="w-[28px]"><Tool name="Hardware acceleration"><circle cx="8" cy="8" r="7.500" fill="#0f63c4" stroke="#2a7fe0" /><path d="M7 9 L12 6" stroke="#7ab8ff" strokeWidth="1.800" /></Tool></StatusCell>
        <StatusCell className="w-[31px]"><Tool name="Isolate objects"><rect x="1" y="1" width="6" height="6" stroke={G} strokeWidth="1.200" /><circle cx="12" cy="7" r="3" stroke={G} strokeWidth="1.200" /><path d="M7 9.500 L10 15 H4 Z" stroke={G} strokeWidth="1.200" /></Tool></StatusCell>
        <div className="h-[25px] w-[13px] shrink-0 overflow-hidden border-y border-l border-[#6e6e6e] bg-[#464646] pt-1 pl-1">
          <Tool name="Clean screen"><rect x="1" y="2" width="16" height="12" stroke={G} strokeWidth="1.300" /><path d="M9 5 L5 10 M5 6 V10 H9" stroke={G} strokeWidth="1.300" /></Tool>
        </div>
      </div>
    </footer>
  );
}

export default function App() {
  const [active, setActive] = useState('Block Editor');

  return (
    <div className="relative flex min-h-screen flex-col overflow-hidden bg-[#5b5b5b] font-['Open_Sans',sans-serif]">
      <TitleBar />
      <RibbonTabs active={active} onPick={setActive} />
      <Ribbon />
      <DocTabs />
      <main className="relative flex flex-1 border-t-4 border-[#5b5b5b]">
        <Palettes />
        <Drawing />
        <Properties />
        <CommandLine />
      </main>
      <StatusBar />

      {/* application menu corner */}
      <button type="button" aria-label="Application menu" className="absolute top-0 left-0 h-10 w-[5px] border-r border-b border-black bg-linear-to-b from-[#777] to-[#aaa]" />
      <span className="pointer-events-none absolute top-0 left-[1024px] font-['DejaVu_Serif',serif] text-[44px] leading-[64px] font-bold whitespace-nowrap text-[#f03c10]">akoshinke</span>
    </div>
  );
}
